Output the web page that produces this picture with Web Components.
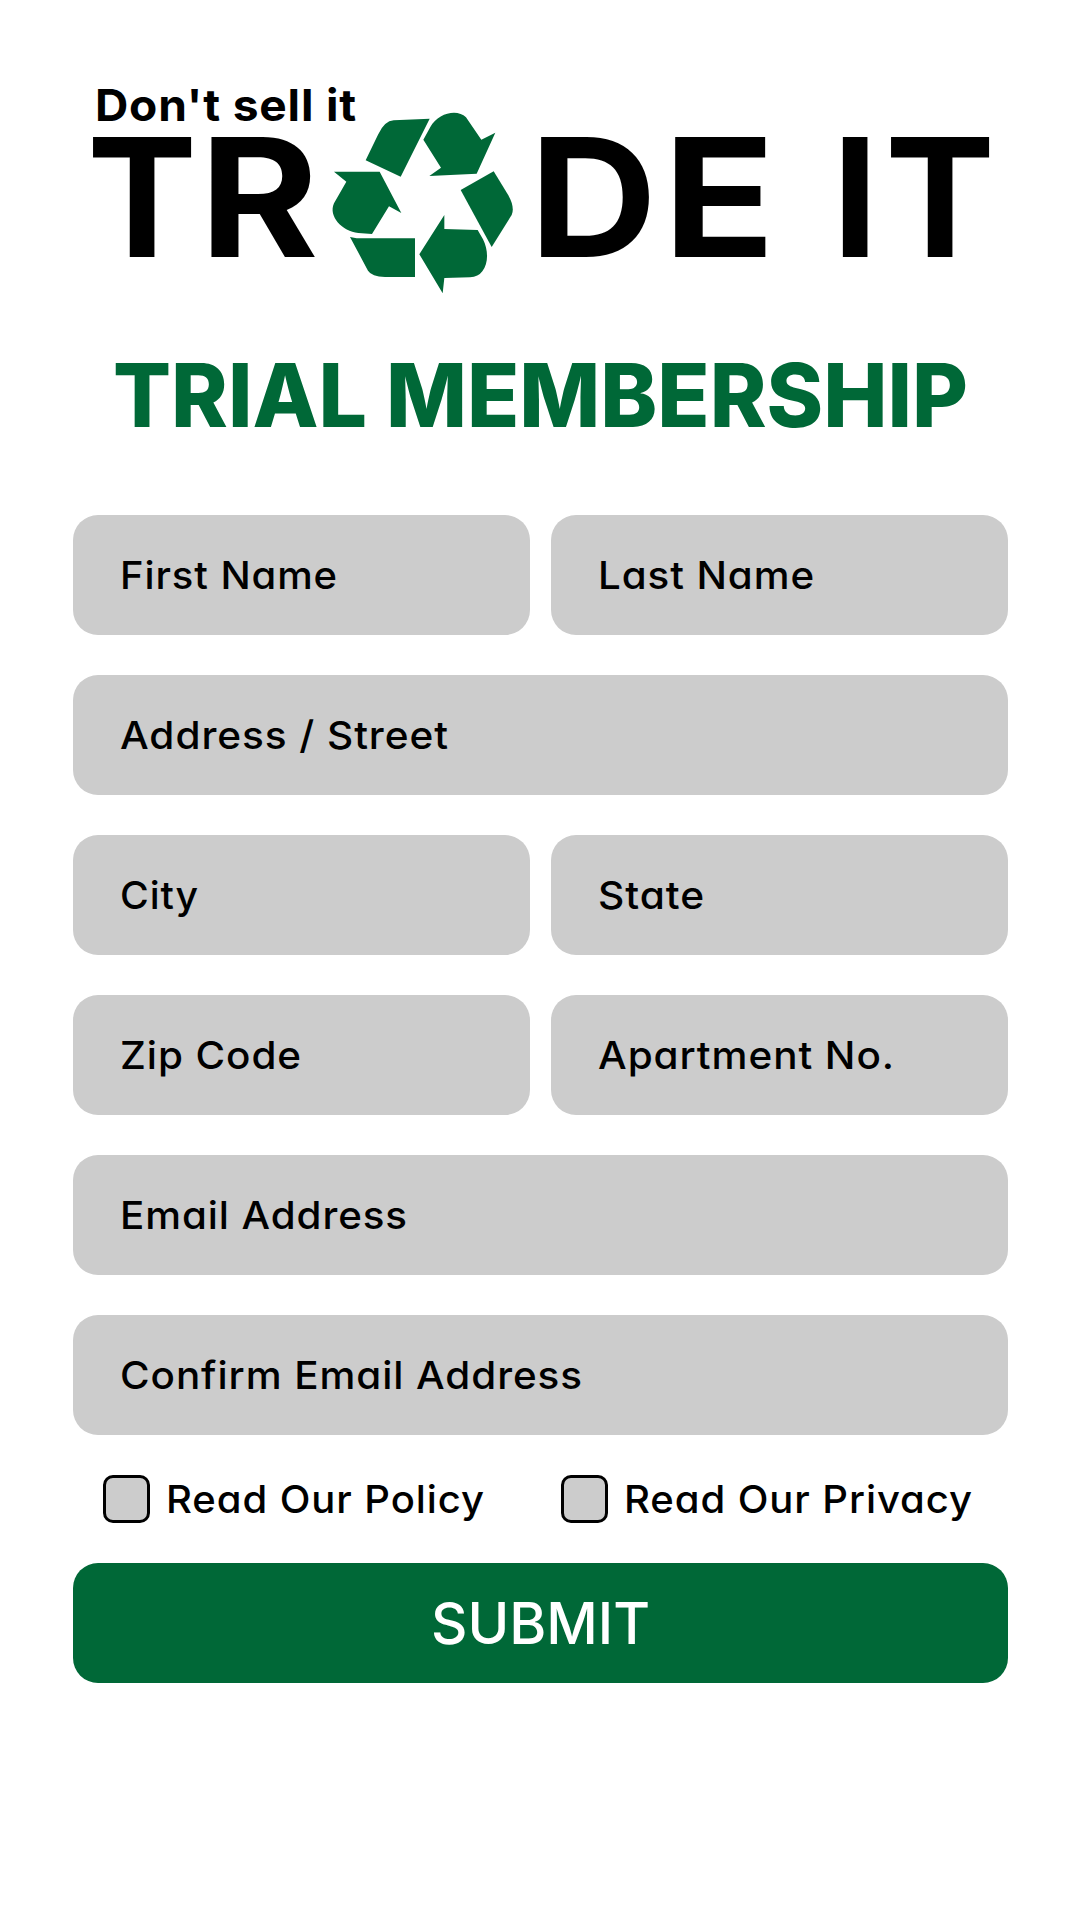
<!DOCTYPE html>
<html lang="en">
<head>
<meta charset="utf-8">
<title>Trade It – Trial Membership</title>
<style>
  body { margin: 0; background: #fff; color: #000; font-family: Inter, "Noto Sans", sans-serif; }
</style>
</head>
<body>
<trial-page></trial-page>
<script>
const define = (name, html, init) => customElements.define(name, class extends HTMLElement {
  constructor() {
    super();
    const t = document.createElement('template');
    t.innerHTML = html;
    this.attachShadow({ mode: 'open' }).append(t.content.cloneNode(true));
  }
  connectedCallback() { if (init) init.call(this); }
});

/* A single line of text stretched to a given width. */
define('fitted-text', `
  <style>
    :host { display: block; white-space: nowrap; line-height: 1; font-feature-settings: "cv11"; }
    span { display: inline-block; transform-origin: 0 50%; }
  </style><span><slot></slot></span>`, function () {
  const span = this.shadowRoot.querySelector('span');
  const target = +this.getAttribute('width');
  const ratio = target / span.getBoundingClientRect().width;
  span.style.transform = 'scaleX(' + ratio + ')';
  this.style.width = target + 'px';
});

define('trade-logo', `
  <style>
    :host { display: block; height: 300px; }
    svg { display: block; }
    text { font-family: Inter, sans-serif; }
    .big { font-size: 165px; font-weight: 740; }
    .tag { font-size: 44.5px; font-weight: 700; letter-spacing: .8px; }
  </style>
  <svg width="1080" height="300" viewBox="0 0 1080 300" role="img" aria-label="Trade It">
    <text class="tag" x="95" y="120.7" textLength="262" lengthAdjust="spacingAndGlyphs">Don't sell it</text>
    <text class="big" y="257"><tspan x="87">T</tspan><tspan x="199.5" data-stretch="1.1">R</tspan></text>
    <text class="big" y="257"><tspan x="529.5" data-stretch="1.07">D</tspan><tspan x="663" data-stretch="1.12">E</tspan></text>
    <text class="big" y="257"><tspan x="832">I</tspan><tspan x="885">T</tspan></text>
    <g fill="#006837" transform="translate(320 100) scale(.33333)">
      <path d="M137 181L174 104Q194 62 221 61L329 56L242 230Z"/>
      <path d="M310 119L331 81C354 39 412 25 438 52L484 119L526 98L470 221L328 228L363 203Z"/>
      <path d="M42 215L179 215L244 339L207 319L156 402L115 399C67 395 24 349 42 310L79 245Z"/>
      <path d="M422 270L521 214L565 286Q585 322 575 345L515 441Z"/>
      <path d="M90 411L110 415H285V531H195Q155 530 144 512Z"/>
      <path d="M298 463L373 345V387L473 390L489 418C505 450 506 489 487 514Q475 531 450 532L373 534L368 580Z"/>
    </g>
  </svg>`, function () {
  for (const s of this.shadowRoot.querySelectorAll('[data-stretch]')) {
    const w = s.getComputedTextLength() * s.dataset.stretch;
    s.setAttribute('lengthAdjust', 'spacingAndGlyphs');
    s.setAttribute('textLength', w);
  }
});

define('form-field', `
  <style>
    :host { display: flex; flex: 1; align-items: center; box-sizing: border-box; height: 120px;
      padding: 0 0 0 47px; border-radius: 25px; background: #ccc; font-size: 38.8px; font-weight: 480; letter-spacing: .9px; }
  </style><slot></slot>`);

define('form-row', `
  <style>:host { display: flex; gap: 21px; }</style><slot></slot>`);

define('check-option', `
  <style>
    :host { display: flex; align-items: center; gap: 16px; font-size: 38.8px; font-weight: 480; letter-spacing: .9px; }
    i { box-sizing: border-box; width: 47px; height: 48px; border: 3px solid #000; border-radius: 10px; background: #ccc; }
  </style><i role="checkbox" aria-checked="false"></i><div><slot></slot></div>`);

define('submit-button', `
  <style>
    :host { display: flex; align-items: center; justify-content: center; box-sizing: border-box; height: 120px; padding-top: 2px; border-radius: 25px;
      background: #006837; color: #fff; font-size: 57.8px; font-weight: 540; }
  </style><slot></slot>`);

define('trial-page', `
  <style>
    :host { display: flex; flex-direction: column; height: 1920px; width: 1080px; background: #fff; }
    h1 { margin: 52px 0 0; padding-left: 113px; height: 88px; font-size: 87.5px; font-weight: 780; color: #006837; }
    main { display: flex; flex-direction: column; gap: 40px; padding: 75px 72px 0 73px; }
    .checks { display: flex; padding: 0 0 0 30px; height: 48px; gap: 76px; }
  </style>
  <trade-logo></trade-logo>
  <h1><fitted-text width="855">TRIAL MEMBERSHIP</fitted-text></h1>
  <main>
    <form-row>
      <form-field><fitted-text width="218">First Name</fitted-text></form-field>
      <form-field><fitted-text width="217">Last Name</fitted-text></form-field>
    </form-row>
    <form-row><form-field><fitted-text width="329">Address / Street</fitted-text></form-field></form-row>
    <form-row>
      <form-field><fitted-text width="79">City</fitted-text></form-field>
      <form-field><fitted-text width="107">State</fitted-text></form-field>
    </form-row>
    <form-row>
      <form-field><fitted-text width="182">Zip Code</fitted-text></form-field>
      <form-field><fitted-text width="297">Apartment No.</fitted-text></form-field>
    </form-row>
    <form-row><form-field><fitted-text width="288">Email Address</fitted-text></form-field></form-row>
    <form-row><form-field><fitted-text width="463">Confirm Email Address</fitted-text></form-field></form-row>
    <div class="checks">
      <check-option><fitted-text width="319">Read Our Policy</fitted-text></check-option>
      <check-option><fitted-text width="349">Read Our Privacy</fitted-text></check-option>
    </div>
    <submit-button><fitted-text width="219">SUBMIT</fitted-text></submit-button>
  </main>`);
</script>
</body>
</html>
